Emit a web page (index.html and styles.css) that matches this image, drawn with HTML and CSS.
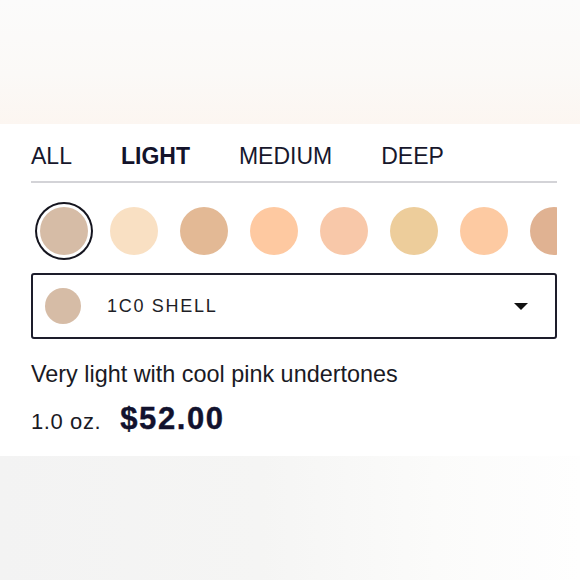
FILE: index.html
```html
<!DOCTYPE html>
<html lang="en">
<head>
  <meta charset="UTF-8">
  <title>Shade Finder</title>
  <meta name="viewport" content="width=device-width, initial-scale=1.0">
  <link rel="stylesheet" href="styles.css">
</head>
<body>
  <div class="hero"></div>

  <div class="panel">
    <div class="tabs">
      <span class="tab">ALL</span>
      <span class="tab active">LIGHT</span>
      <span class="tab">MEDIUM</span>
      <span class="tab">DEEP</span>
    </div>

    <div class="swatches">
      <span class="swatch selected" style="background:#d6bca6"></span>
      <span class="swatch" style="background:#f9e0c3"></span>
      <span class="swatch" style="background:#e3b995"></span>
      <span class="swatch" style="background:#fec9a1"></span>
      <span class="swatch" style="background:#f8c8a9"></span>
      <span class="swatch" style="background:#edcd9b"></span>
      <span class="swatch" style="background:#fdcaa2"></span>
      <span class="swatch" style="background:#e0b292"></span>
    </div>

    <div class="select">
      <span class="select-dot"></span>
      <span class="select-name">1C0 SHELL</span>
      <span class="caret"></span>
    </div>

    <p class="desc">Very light with cool pink undertones</p>

    <div class="price-row">
      <span class="size">1.0 oz.</span>
      <span class="price">$52.00</span>
    </div>
  </div>

  <div class="footer"></div>
</body>
</html>
```

FILE: styles.css
```css
body { margin: 0; font-family: "Liberation Sans", Arial, sans-serif; color: #16162a; background: #fff; }

.hero { height: 124px; background: linear-gradient(to bottom, #fbfbfb 0%, #fbf9f7 60%, #fcf6f1 100%); }
.footer { height: 124px; background: linear-gradient(to right, #f3f3f3 0%, #f5f5f4 45%, #fbfbfa 75%, #fefefe 100%); }

.panel { background: #fff; padding: 0 23px 0 31px; height: 332px; box-sizing: border-box; }

.tabs { display: flex; gap: 49px; padding: 18px 0 11px; border-bottom: 2px solid #d3d3d7; }
.tab { font-size: 23px; line-height: 28px; color: #17172c; }
.tab.active { font-weight: bold; color: #13132b; }

.swatches { display: flex; gap: 22px; margin-top: 19px; padding: 5px 0 5px 9px; overflow: hidden; }
.swatch { flex: none; width: 48px; height: 48px; border-radius: 50%; }
.swatch.selected { box-shadow: 0 0 0 3px #fff, 0 0 0 5px #15151f; }

.select { display: flex; align-items: center; height: 66px; box-sizing: border-box; margin-top: 13px; padding: 0 27px 0 12px; border: 2px solid #1d1d2b; border-radius: 3px; }
.select-dot { width: 36px; height: 36px; border-radius: 50%; background: #d6bca6; }
.select-name { margin-left: 26px; font-size: 18px; letter-spacing: 1.7px; color: #1e1e26; }
.caret { margin-left: auto; width: 0; height: 0; border-left: 7px solid transparent; border-right: 7px solid transparent; border-top: 7px solid #111; }

.desc { margin: 21px 0 0; font-size: 23.4px; line-height: 28px; color: #1a1a24; }

.price-row { display: flex; align-items: baseline; gap: 19px; margin-top: 13px; line-height: 36px; }
.size { font-size: 22px; letter-spacing: 0.6px; color: #1a1a24; }
.price { font-size: 31px; font-weight: bold; letter-spacing: 1.6px; color: #12122e; -webkit-text-stroke: 0.4px #12122e; }
```
